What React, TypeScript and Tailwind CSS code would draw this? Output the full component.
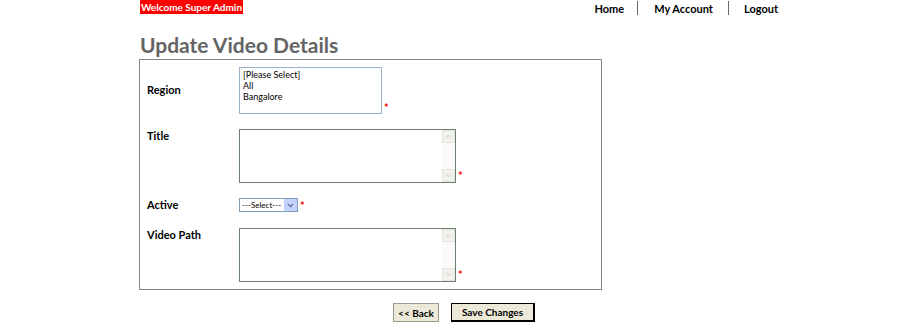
import { ChevronDown, ChevronUp } from "lucide-react";

function Star() {
  return <span className="ml-[2px] text-[11px] font-bold leading-none text-[#ff0000]">*</span>;
}

function TextBox() {
  return (
    <div className="flex items-end">
      <div className="flex h-[54px] w-[217px] border border-[#6d806d] bg-white">
        <div className="flex-1" />
        <div className="flex w-[13px] flex-col justify-between bg-[#fbfbfb]">
          <div className="flex h-[13px] items-center justify-center border border-[#e4e4e0] bg-[#f1f1ee]">
            <ChevronUp size={9} strokeWidth={2} className="text-[#c4c4be]" />
          </div>
          <div className="flex h-[13px] items-center justify-center border border-[#e4e4e0] bg-[#f1f1ee]">
            <ChevronDown size={9} strokeWidth={2} className="text-[#c4c4be]" />
          </div>
        </div>
      </div>
      <div className="-mb-[3px]">
        <Star />
      </div>
    </div>
  );
}

export default function App() {
  return (
    <div className="min-h-[332px] bg-white font-['Lato','Open_Sans',sans-serif] text-black">
      <div className="ml-[140px] flex w-[650px] items-start">
        <div className="flex h-[14px] w-[103px] items-center justify-center bg-[#ff0000] text-[10px] font-bold leading-none text-white">
          Welcome Super Admin
        </div>
        <nav className="ml-auto mr-[12px] flex items-center pt-[1px] text-[11px] font-bold leading-none">
          <span>Home</span>
          <span className="mx-[13px] h-[14px] w-px bg-[#666]" />
          <span className="ml-[3px]">My Account</span>
          <span className="mx-[15px] h-[14px] w-px bg-[#666]" />
          <span>Logout</span>
        </nav>
      </div>

      <h1 className="ml-[140px] mt-[17px] text-[21px] font-bold leading-[26px] text-[#646464]">
        Update Video Details
      </h1>

      <div className="ml-[139px] mt-[1px] flex h-[231px] w-[463px] flex-col border border-[#7b8a7b] pl-[7px] pt-[7px]">
        <div className="flex items-center">
          <div className="w-[92px] text-[11px] font-bold">Region</div>
          <div className="flex items-end">
            <div className="h-[47px] w-[143px] border border-[#9db0c9] bg-white px-[3px] pt-[1px] text-[9px] leading-[11px]">
              <div>[Please Select]</div>
              <div>All</div>
              <div>Bangalore</div>
            </div>
            <div className="-mb-[4px]">
              <Star />
            </div>
          </div>
        </div>

        <div className="mt-[15px] flex items-start">
          <div className="-mt-[1px] w-[92px] text-[11px] font-bold">Title</div>
          <TextBox />
        </div>

        <div className="mt-[15px] flex h-[14px] items-center">
          <div className="w-[92px] text-[11px] font-bold">Active</div>
          <div className="flex h-[14px] w-[59px] items-center border border-[#7f9db9] bg-white">
            <span className="flex-1 whitespace-nowrap pl-[2px] text-[8px] leading-none">---Select---</span>
            <span className="flex h-[12px] w-[13px] shrink-0 items-center justify-center bg-[#c3d3fd]">
              <ChevronDown size={9} strokeWidth={3} className="text-[#4d6185]" />
            </span>
          </div>
          <div className="-mt-[2px]">
            <Star />
          </div>
        </div>

        <div className="mt-[16px] flex items-start">
          <div className="-mt-[1px] w-[92px] text-[11px] font-bold">Video Path</div>
          <TextBox />
        </div>
      </div>

      <div className="ml-[393px] mt-[13px] flex items-center gap-[12px]">
        <button className="h-[19px] w-[46px] border border-[#9a9a90] bg-[#ece9d8] text-[10px] font-bold leading-none">
          &lt;&lt; Back
        </button>
        <button className="h-[19px] w-[84px] border border-black border-b-2 border-r-2 bg-[#ece9d8] text-[10px] font-bold leading-none">
          Save Changes
        </button>
      </div>
    </div>
  );
}
